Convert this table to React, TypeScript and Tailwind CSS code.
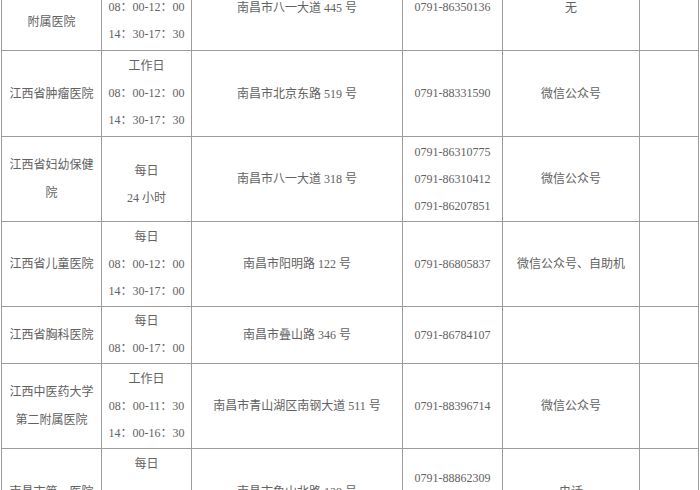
type Row = {
  h: number;
  name: string[];
  hours: string[];
  hoursClass?: string;
  addr: string;
  phones: string[];
  pay: string;
};

const rows: Row[] = [
  {
    h: 86,
    name: ["江西中医药大学", "附属医院"],
    hours: ["工作日", "08：00-12：00", "14：30-17：30"],
    addr: "南昌市八一大道 445 号",
    phones: ["0791-86350136"],
    pay: "无",
  },
  {
    h: 86,
    name: ["江西省肿瘤医院"],
    hours: ["工作日", "08：00-12：00", "14：30-17：30"],
    addr: "南昌市北京东路 519 号",
    phones: ["0791-88331590"],
    pay: "微信公众号",
  },
  {
    h: 85,
    name: ["江西省妇幼保健", "院"],
    hours: ["每日", "24 小时"],
    hoursClass: "leading-[19px] pt-[12px]",
    addr: "南昌市八一大道 318 号",
    phones: ["0791-86310775", "0791-86310412", "0791-86207851"],
    pay: "微信公众号",
  },
  {
    h: 85,
    name: ["江西省儿童医院"],
    hours: ["每日", "08：00-12：00", "14：30-17：00"],
    addr: "南昌市阳明路 122 号",
    phones: ["0791-86805837"],
    pay: "微信公众号、自助机",
  },
  {
    h: 57,
    name: ["江西省胸科医院"],
    hours: ["每日", "08：00-17：00"],
    addr: "南昌市叠山路 346 号",
    phones: ["0791-86784107"],
    pay: "",
  },
  {
    h: 85,
    name: ["江西中医药大学", "第二附属医院"],
    hours: ["工作日", "08：00-11：30", "14：00-16：30"],
    addr: "南昌市青山湖区南钢大道 511 号",
    phones: ["0791-88396714"],
    pay: "微信公众号",
  },
  {
    h: 86,
    name: ["南昌市第一医院"],
    hours: ["每日", "\u00a0", "24 小时"],
    addr: "南昌市象山北路 128 号",
    phones: ["0791-88862309", "0791-88862310"],
    pay: "电话",
  },
];

function Lines({ items, className = "" }: { items: string[]; className?: string }) {
  return (
    <div className={"leading-[27px] " + className}>
      {items.map((t, i) => (
        <div key={i}>{t}</div>
      ))}
    </div>
  );
}

const cell = "border border-[#9c9c9c] text-center align-middle p-0";

export default function App() {
  return (
    <div
      className="w-[700px] h-[490px] overflow-hidden bg-white"
      style={{ fontFamily: '"Liberation Serif", "Noto Sans CJK SC", serif' }}
    >
      <table className="table-fixed border-collapse ml-[1px] mt-[-36px] text-[12px] text-[#626262]">
        <colgroup>
          <col className="w-[100px]" />
          <col className="w-[90px]" />
          <col className="w-[211px]" />
          <col className="w-[100px]" />
          <col className="w-[137px]" />
          <col className="w-[59px]" />
        </colgroup>
        <tbody>
          {rows.map((r, i) => (
            <tr key={i} style={{ height: r.h }}>
              <td className={cell}>
                <Lines items={r.name} className="leading-[28px]" />
              </td>
              <td className={cell}>
                <Lines items={r.hours} className={r.hoursClass} />
              </td>
              <td className={cell}>{r.addr}</td>
              <td className={cell}>
                <Lines items={r.phones} />
              </td>
              <td className={cell}>{r.pay}</td>
              <td className={cell}></td>
            </tr>
          ))}
        </tbody>
      </table>
    </div>
  );
}
